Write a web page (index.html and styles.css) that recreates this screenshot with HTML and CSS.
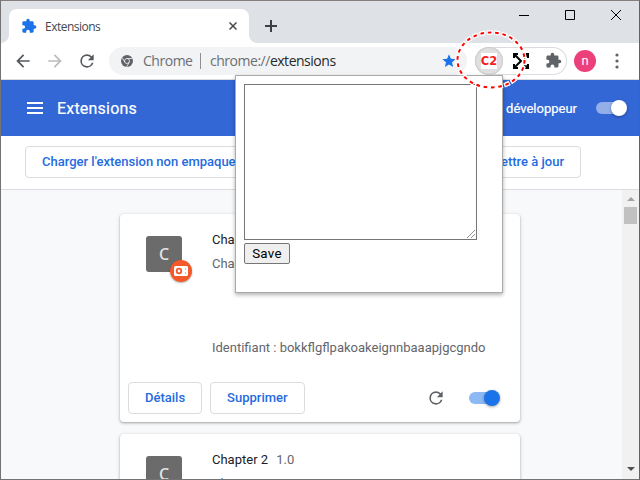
FILE: index.html
```html
<!DOCTYPE html>
<html lang="fr">
<head>
<meta charset="utf-8">
<title>Extensions</title>
<link rel="stylesheet" href="styles.css">
</head>
<body>
<svg width="0" height="0" class="defs">
  <symbol id="puzzle" viewBox="0 0 24 24"><path d="M20.5 11H19V7c0-1.1-.9-2-2-2h-4V3.5a2.500 2.500 0 0 0-5 0V5H4c-1.100 0-2 .9-2 2v3.800h1.500a2.700 2.700 0 0 1 0 5.400H2V20c0 1.100.9 2 2 2h3.800v-1.500a2.700 2.700 0 0 1 5.400 0V22H17c1.100 0 2-.9 2-2v-4h1.500a2.500 2.500 0 0 0 0-5z"/></symbol>
  <symbol id="reload" viewBox="0 0 24 24"><path d="M17.650 6.350A7.958 7.958 0 0 0 12 4a8 8 0 1 0 7.730 10h-2.080A6 6 0 1 1 12 6c1.660 0 3.140.69 4.220 1.780L13 11h7V4z"/></symbol>
</svg>
<div class="window">
  <div class="strip">
    <div class="tab">
      <svg class="tab-icon"><use href="#puzzle"/></svg>
      <span class="tab-title">Extensions</span>
      <svg class="tab-close" viewBox="0 0 8 8"><path d="M.5.5l7 7M7.500.5l-7 7"/></svg>
    </div>
    <svg class="tab-new" viewBox="0 0 12 12"><path d="M6 0v12M0 6h12"/></svg>
    <div class="controls">
      <svg viewBox="0 0 10 10"><path d="M0 5.500h10"/></svg>
      <svg viewBox="0 0 10 10"><path d="M.5.5h9v9h-9z"/></svg>
      <svg viewBox="0 0 10 10"><path d="M0 0l10 10M10 0L0 10"/></svg>
    </div>
  </div>

  <div class="toolbar">
    <svg class="nav" viewBox="0 0 24 24"><path d="M20 11H7.830l5.590-5.590L12 4l-8 8 8 8 1.410-1.410L7.830 13H20z"/></svg>
    <svg class="nav nav-off" viewBox="0 0 24 24"><path d="M12 4l-1.410 1.410L16.170 11H4v2h12.170l-5.580 5.590L12 20l8-8z"/></svg>
    <svg class="nav"><use href="#reload"/></svg>
    <div class="omnibox">
      <svg class="chrome-icon" viewBox="0 0 12 12"><circle cx="6" cy="6" r="6" fill="#5f6368"/><g fill="none" stroke="#f1f3f4" stroke-width=".8"><circle cx="6" cy="6" r="2.500"/><path d="M6 3.500h5.500M3.800 7.200L1.200 2.600M8.200 7.200L5.600 12"/></g></svg>
      <span class="origin">Chrome</span>
      <span class="sep"></span>
      <span class="url"><span class="scheme">chrome://</span>extensions</span>
      <svg class="star" viewBox="0 0 24 24"><path d="M12 17.270L18.180 21l-1.640-7.030L22 9.240l-7.190-.61L12 2 9.190 8.630 2 9.240l5.460 4.730L5.820 21z"/></svg>
    </div>
    <div class="ext-box">
      <span class="ext-active"><span class="ext-c2">C2</span></span>
      <svg class="ext-arrows" viewBox="0 0 16 16"><path d="M1 5V1h4M1 1l7 7-7 7M1 11v4h4M11 1h4v4M15 1l-4 4M11 15h4v-4M15 15l-4-4"/></svg>
      <svg class="ext-puzzle"><use href="#puzzle"/></svg>
    </div>
    <span class="avatar">n</span>
    <svg class="menu" viewBox="0 0 4 16"><circle cx="2" cy="2" r="1.600"/><circle cx="2" cy="8" r="1.600"/><circle cx="2" cy="14" r="1.600"/></svg>
  </div>

  <div class="header">
    <svg class="burger" viewBox="0 0 16 12"><path d="M0 1h16M0 6h16M0 11h16"/></svg>
    <span class="header-title">Extensions</span>
    <span class="dev">Mode développeur</span>
    <span class="toggle toggle-light"></span>
  </div>

  <div class="actions">
    <span class="btn btn-load">Charger l'extension non empaquetée</span>
    <span class="btn btn-update">Mettre à jour</span>
  </div>

  <div class="content">
    <div class="list">
      <div class="card">
        <div class="info">
          <div class="logo">C
            <span class="badge"><svg viewBox="0 0 14 10"><rect width="14" height="10" rx="1.500" fill="#fff"/><circle cx="5" cy="5" r="2.300" fill="#fff" stroke="#f4592b" stroke-width="1.800"/><path d="M11.200 2l1 1-1 1zM11.200 6l1 1-1 1z" fill="#f4592b"/></svg></span>
          </div>
          <div class="text">
            <div class="name">Chapter 1 <span class="version">1.0</span></div>
            <div class="desc">Chapter 1</div>
            <div class="ident">Identifiant : bokkflgflpakoakeignnbaaapjgcgndo</div>
          </div>
        </div>
        <div class="foot">
          <span class="btn btn-details">Détails</span>
          <span class="btn btn-remove">Supprimer</span>
          <svg class="refresh"><use href="#reload"/></svg>
          <span class="toggle"></span>
        </div>
      </div>
      <div class="card">
        <div class="info">
          <div class="logo">C</div>
          <div class="text">
            <div class="name">Chapter 2 <span class="version">1.0</span></div>
            <div class="desc">Chapter 2</div>
          </div>
        </div>
      </div>
    </div>
    <div class="scrollbar">
      <svg viewBox="0 0 8 4"><path d="M0 4l4-4 4 4z" fill="#a3a3a3"/></svg>
      <span class="thumb"></span>
      <svg class="down" viewBox="0 0 8 4"><path d="M0 0l4 4 4-4z" fill="#505050"/></svg>
    </div>
  </div>
</div>

<div class="popup">
  <div class="area"><svg viewBox="0 0 9 9"><path d="M1 9l8-8M5 9l4-4"/></svg></div>
  <div class="save">Save</div>
</div>

<svg class="ring" viewBox="0 0 80 68"><ellipse class="halo" cx="41" cy="34" rx="33.500" ry="27.500"/><ellipse class="dash" cx="41" cy="34" rx="33.500" ry="27.500"/></svg>
</body>
</html>
```
FILE: styles.css
```css
* { box-sizing: border-box; }
body { margin: 0; width: 640px; height: 480px; overflow: hidden; font-family: Roboto, sans-serif; font-size: 13px; }
svg { display: block; flex: none; }
.defs { position: absolute; }
.window { width: 640px; height: 480px; display: flex; flex-direction: column; overflow: hidden; background: #fff; border: 1px solid #737373; border-top-color: #857d7d; border-right-color: #626262; }

.strip { height: 42px; flex: none; display: flex; background: #dee1e6; padding: 8px 0 0 8px; }
.tab { position: relative; width: 240px; height: 34px; background: #fff; border-radius: 8px 8px 0 0; display: flex; align-items: center; padding: 0 12px; }
.tab::before, .tab::after { content: ""; position: absolute; bottom: 0; width: 8px; height: 8px; }
.tab::before { left: -8px; background: radial-gradient(circle at 0 0, #dee1e6 7.5px, #fff 8.2px); }
.tab::after { right: -8px; background: radial-gradient(circle at 100% 0, #dee1e6 7.5px, #fff 8.2px); }
.tab-icon { width: 16px; height: 16px; fill: #1a73e8; }
.tab-title { font: 12px "Open Sans", sans-serif; letter-spacing: -.52px; color: #45484c; margin-left: 8px; margin-top: 1px; flex: 1; }
.tab-close { width: 8px; height: 8px; fill: none; stroke: #45494d; stroke-width: 1.5; }
.tab-new { width: 12px; height: 12px; margin: 11px 0 0 16px; fill: none; stroke: #3c4043; stroke-width: 2; }
.controls { display: flex; gap: 36px; margin: 1px 18px 0 auto; }
.controls svg { width: 10px; height: 10px; fill: none; stroke: #000; overflow: visible; }

.toolbar { height: 37px; flex: none; display: flex; align-items: center; padding: 0 0 1px 12px; background: #fff; border-bottom: 1px solid #d9dbde; }
.nav { width: 20px; height: 20px; margin-right: 12px; fill: #54585d; }
.nav-off { fill: #bbbcbe; }
.omnibox { width: 358px; height: 28px; border-radius: 14px; background: #f1f3f4; display: flex; align-items: center; padding: 0 10px 0 12px; font: 14px "Open Sans", sans-serif; letter-spacing: -.48px; color: #27292c; }
.chrome-icon { width: 12px; height: 12px; margin-right: 10px; }
.origin { color: #6b6f74; width: 57px; }
.sep { width: 1px; height: 16px; background: #8c8f93; margin-right: 9px; }
.url { flex: 1; }
.scheme { color: #6b6f74; }
.star { width: 16px; height: 16px; fill: #1a73e8; }
.ext-box { width: 92px; height: 28px; margin-left: 8px; border-radius: 14px; box-shadow: inset 0 0 0 1px #dadce0; display: flex; align-items: center; }
.ext-active { width: 28px; height: 28px; border-radius: 14px; background: #dfdfdf; box-shadow: inset 0 0 0 1px #ccc; display: flex; align-items: center; justify-content: center; }
.ext-c2 { width: 16px; height: 16px; background: #fff; color: #f41f1f; font: bold 11.5px/17px "DejaVu Sans", sans-serif; display: flex; justify-content: center; }
.ext-arrows { width: 16px; height: 16px; margin-left: 10px; fill: none; stroke: #000; stroke-width: 2; }
.ext-puzzle { width: 17px; height: 17px; fill: #5f6368; margin-left: 16px; }
.avatar { width: 22px; height: 22px; border-radius: 50%; background: #ec407a; color: #fff; margin-left: 7px; font-size: 13px; line-height: 22px; text-align: center; }
.menu { width: 4px; height: 16px; margin-left: 19px; fill: #5f6368; }

.header { height: 56px; flex: none; background: #3367d6; color: #fff; display: flex; align-items: center; padding: 0 11px 0 26px; }
.burger { width: 16px; height: 12px; stroke: #fff; stroke-width: 2; }
.header-title { font-size: 16px; letter-spacing: .2px; margin-left: 14px; margin-top: 1px; flex: 1; font-weight: 400; -webkit-text-stroke: .2px #fff; }
.dev { margin-right: 19px; -webkit-text-stroke: .2px #fff; }
.toggle { position: relative; width: 32px; height: 16px; flex: none; }
.toggle::before { content: ""; position: absolute; left: 0; top: 2px; width: 26px; height: 12px; border-radius: 6px; background: #8cb8f3; }
.toggle::after { content: ""; position: absolute; left: 15px; top: 0; width: 16px; height: 16px; border-radius: 50%; background: #1a73e8; box-shadow: 0 1px 3px rgba(0,0,0,.35); }
.toggle-light::before { background: #94aee8; }
.toggle-light::after { background: #fff; }

.actions { height: 54px; flex: none; display: flex; justify-content: space-between; padding: 10px 58px 0 24px; border-bottom: 1px solid #dadce0; }
.btn { height: 32px; border: 1px solid #dadce0; border-radius: 4px; color: #1f6be0; font-weight: 500; line-height: 30px; padding: 0 16px; white-space: nowrap; }

.content { flex: 1; min-height: 0; display: flex; background: #f8f9fa; }
.list { flex: 1; padding: 24px 0 0 119px; display: flex; flex-direction: column; gap: 12px; overflow: hidden; }
.card { width: 400px; height: 208px; flex: none; background: #fff; border-radius: 4px; box-shadow: 0 1px 2px rgba(60,64,67,.3), 0 1px 3px 1px rgba(60,64,67,.15); display: flex; flex-direction: column; justify-content: space-between; padding: 0 0 8px 8px; }
.info { display: flex; padding: 16px 0 0 18px; }
.logo { position: relative; width: 36px; height: 36px; margin-top: 6px; border-radius: 3px; background: #6b6b6b; color: #e4e4e4; font: 500 16px/37px "Noto Sans", sans-serif; text-align: center; }
.badge { position: absolute; left: 24px; top: 24px; width: 22px; height: 22px; border-radius: 50%; background: #f4592b; box-shadow: 0 1px 2px rgba(0,0,0,.3); display: flex; align-items: center; justify-content: center; }
.badge svg { width: 14px; height: 10px; }
.text { margin-left: 30px; line-height: 20px; color: #63666b; }
.name { color: #202124; }
.version { color: #63666b; margin-left: 5px; }
.desc { margin-top: 4px; }
.ident { margin-top: 64px; }
.foot { display: flex; align-items: center; }
.btn-remove { margin-left: 8px; }
.refresh { width: 20px; height: 20px; fill: #5f6368; margin: 0 23px 0 auto; }
.foot .toggle { margin-right: 19px; }

.scrollbar { width: 17px; background: #f1f1f1; display: flex; flex-direction: column; align-items: center; padding: 7px 0 8px; }
.scrollbar svg { width: 8px; height: 4px; }
.thumb { width: 13px; height: 17px; margin-top: 6px; background: #c1c1c1; }
.down { margin-top: auto; }
.card + .card .desc { margin-top: 4px; color: #1a73e8; }

.popup { position: absolute; left: 235px; top: 75px; width: 268px; height: 218px; background: #fff; border: 1px solid #aaa; box-shadow: 0 2px 4px rgba(0,0,0,.3); padding: 8px; }
.area { width: 233px; height: 156px; border: 1px solid #767676; display: flex; justify-content: flex-end; align-items: flex-end; padding: 1px; }
.area svg { width: 9px; height: 9px; fill: none; stroke: #777; stroke-width: .8; }
.save { width: 46px; height: 21px; margin-top: 3px; border: 1px solid #767676; border-radius: 2px; background: #efefef; color: #000; font-size: 13.33px; letter-spacing: .3px; line-height: 19px; text-align: center; }

.ring { position: absolute; left: 450px; top: 26px; width: 80px; height: 68px; fill: none; }
.halo { stroke: #fff; stroke-width: 4.6; stroke-dasharray: 6 1.4; stroke-dashoffset: 1; }
.dash { stroke: #f00; stroke-width: 2; stroke-dasharray: 3.6 3.8; }
```
